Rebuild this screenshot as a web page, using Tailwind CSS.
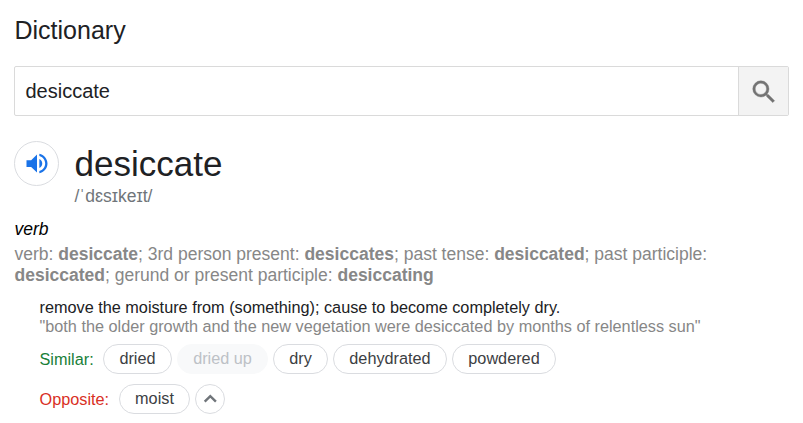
<!DOCTYPE html>
<html lang="en">
<head>
<meta charset="utf-8">
<title>Dictionary</title>
<script src="https://cdn.jsdelivr.net/npm/@tailwindcss/browser@4"></script>
</head>
<body class="h-[423px] overflow-hidden bg-white pl-[14px] pr-[14px] font-['Liberation_Sans',Arial,sans-serif] text-[#202124]">
  <h1 class="pt-[15px] pl-[0.5px] text-[25px] leading-[30px]">Dictionary</h1>
  <div class="mt-[21px] flex h-[50px] w-[775px] overflow-hidden rounded-[2px] border border-[#dadada]">
    <div class="flex-1 pl-[10.5px] text-[20px] leading-[48px]">desiccate</div>
    <div class="flex w-[50px] items-center justify-center border-l border-[#dadada] bg-[#f3f3f3]">
      <svg class="mt-[2px] h-[30px] w-[30px]" viewBox="0 0 24 24" fill="#737373" stroke="#737373" stroke-width=".3"><path d="M15.5 14h-.79l-.28-.27A6.471 6.471 0 0 0 16 9.500A6.500 6.500 0 1 0 9.500 16c1.610 0 3.090-.59 4.230-1.570l.27.28v.79l5 4.990L20.490 19l-4.990-5zm-6 0C7.010 14 5 11.990 5 9.500S7.010 5 9.500 5 14 7.010 14 9.500 11.990 14 9.500 14z"/></svg>
    </div>
  </div>
  <div class="mt-[25px] flex">
    <div class="flex h-[45px] w-[45px] items-center justify-center rounded-full border border-[#dadce0]">
      <svg class="h-[27px] w-[28px]" preserveAspectRatio="none" viewBox="0 0 24 24" fill="#1a73e8"><path d="M3 9v6h4l5 5V4L7 9H3zm13.500 3c0-1.770-1.020-3.290-2.500-4.030v8.050c1.480-.73 2.500-2.250 2.500-4.020zM14 3.230v2.060c2.890.86 5 3.540 5 6.710s-2.110 5.850-5 6.710v2.060c4.010-.91 7-4.490 7-8.770s-2.990-7.860-7-8.770z"/></svg>
    </div>
    <div class="pl-[15.5px]">
      <div class="h-[44px] text-[35px] leading-[46px]">desiccate</div>
      <div class="h-[22px] text-[17.5px] leading-[22px] text-[#70757a]">/ˈdɛsɪkeɪt/</div>
    </div>
  </div>
  <div class="mt-[11px] pl-[0.5px] text-[17.5px] leading-[22px] text-black italic">verb</div>
  <div class="mt-[4px] pl-[0.5px] text-[17.5px] leading-[21px] whitespace-nowrap text-[#878787]">verb: <b>desiccate</b>; 3rd person present: <b>desiccates</b>; past tense: <b>desiccated</b>; past participle:<br><b>desiccated</b>; gerund or present participle: <b>desiccating</b></div>
  <div class="pl-[25.5px] text-[16.25px] whitespace-nowrap">
    <div class="mt-[12px] leading-[19px]">remove the moisture from (something); cause to become completely dry.</div>
    <div class="leading-[19px] text-[#878787]">"both the older growth and the new vegetation were desiccated by months of relentless sun"</div>
    <div class="mt-[8px] flex h-[30px] gap-[5px] leading-[26px] text-[#3c4043]">
      <span class="w-[58.5px] leading-[31px] text-[#188038]">Similar:</span>
      <span class="w-[69px] rounded-full border border-[#dadce0] text-center">dried</span>
      <span class="w-[91px] rounded-full border border-[#f8f9fa] bg-[#f8f9fa] text-center text-[#bdc1c6]">dried up</span>
      <span class="w-[55px] rounded-full border border-[#dadce0] text-center">dry</span>
      <span class="w-[114px] rounded-full border border-[#dadce0] text-center">dehydrated</span>
      <span class="w-[104px] rounded-full border border-[#dadce0] text-center">powdered</span>
    </div>
    <div class="mt-[10px] flex h-[30px] gap-[5px] leading-[26px] text-[#3c4043]">
      <span class="w-[74.5px] leading-[31px] text-[#d93025]">Opposite:</span>
      <span class="w-[71px] rounded-full border border-[#dadce0] text-center">moist</span>
      <span class="flex w-[30px] items-center justify-center rounded-full border border-[#dadce0]">
        <svg class="h-[24px] w-[24px] shrink-0" viewBox="0 0 24 24" fill="none" stroke="#70757a" stroke-width="2.4"><path d="M6.700 14.700L12.300 9.100l5.600 5.600"/></svg>
      </span>
    </div>
  </div>
</body>
</html>
